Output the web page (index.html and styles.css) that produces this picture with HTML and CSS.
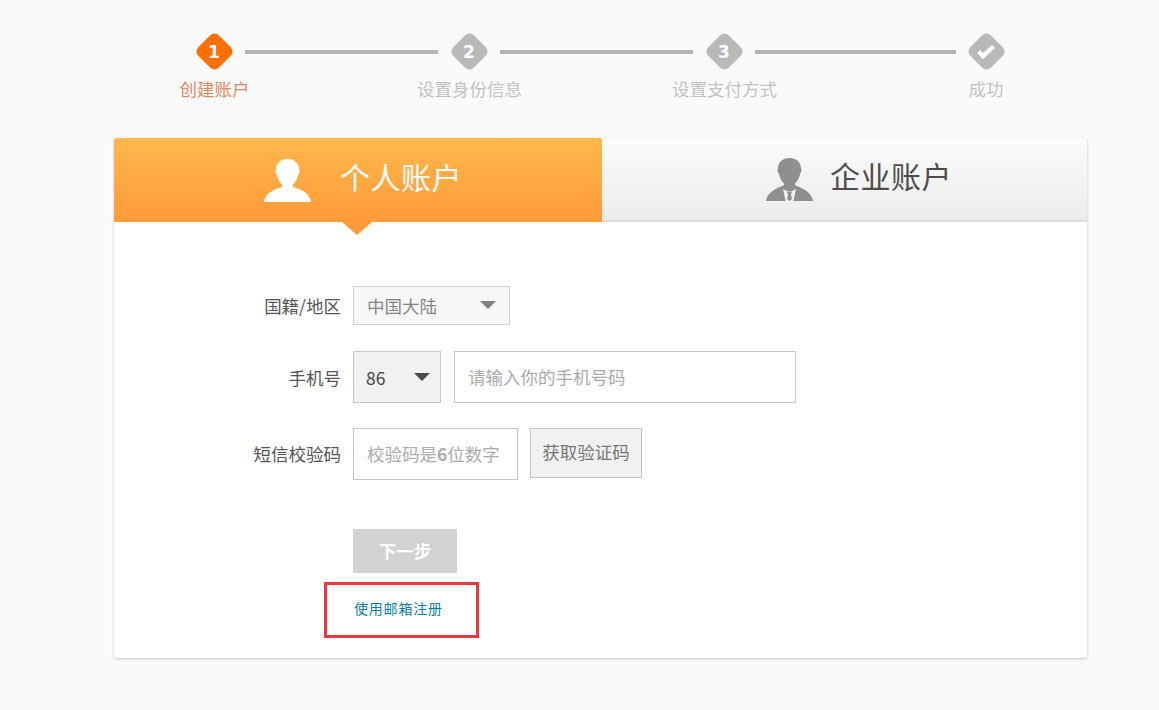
FILE: index.html
```html
<!DOCTYPE html>
<html lang="zh-CN">
<head>
    <meta charset="utf-8">
    <link rel="stylesheet" href="styles.css">
    <title>注册</title>
</head>
<body>
    <div class="steps">
        <div class="step-icons">
            <span class="step-icon active">1</span>
            <span class="step-line"></span>
            <span class="step-icon">2</span>
            <span class="step-line"></span>
            <span class="step-icon">3</span>
            <span class="step-line last"></span>
            <span class="step-icon">
                <svg width="20" height="16" viewBox="0 0 20 16"><path d="M1 9l3-3 3 3L16 1l3 3L7 15z" fill="#fff"/></svg>
            </span>
        </div>
        <div class="step-labels">
            <span class="active">创建账户</span>
            <span>设置身份信息</span>
            <span>设置支付方式</span>
            <span>成功</span>
        </div>
    </div>

    <div class="card">
        <div class="tabs">
            <div class="tab tab-on">
                <svg width="47" height="43" viewBox="0 0 47 43"><path d="M23.500 0C16.500 0 12 4.500 12 10.500 11 11 11.300 14 12.800 15.500 13.800 20 16 24 18 25.500V28C10 30.500 2 33 0 42.500 0 43 .5 43 1 43H46C46.500 43 47 43 47 42.500 45 33 37 30.500 29 28V25.500C31 24 33.200 20 34.200 15.500 35.700 14 36 11 35 10.500 35 4.500 30.500 0 23.500 0Z" fill="#fff"/></svg>
                <span class="tab-text">个人账户</span>
            </div>
            <div class="tab tab-off">
                <svg width="47" height="43" viewBox="0 0 47 43"><path d="M23.500 0C16.500 0 12 4.500 12 10.500 11 11 11.300 14 12.800 15.500 13.800 20 16 24 18 25.500V27C12 30 2 33 0 42.500 0 43 .5 43 1 43H19.500L17 31 21 33H26L30 31 27.500 43H46C46.500 43 47 43 47 42.500 45 33 35 30 29 27V25.500C31 24 33.200 20 34.200 15.500 35.700 14 36 11 35 10.500 35 4.500 30.500 0 23.500 0Z" fill="#8f8f8f"/><path d="M21 33.500h5l-1 3.500 1 4-2.500 2-2.500-2 1-4z" fill="#8f8f8f"/></svg>
                <span class="tab-text">企业账户</span>
            </div>
        </div>

        <div class="form">
            <div class="row row-country">
                <span class="row-label">国籍/地区</span>
                <div class="select select-country">中国大陆<i class="arrow"></i></div>
            </div>
            <div class="row row-phone">
                <span class="row-label">手机号</span>
                <div class="select select-code">86<i class="arrow dark"></i></div>
                <div class="input input-phone">请输入你的手机号码</div>
            </div>
            <div class="row row-code">
                <span class="row-label">短信校验码</span>
                <div class="input input-code">校验码是<b>6</b>位数字</div>
                <button class="btn-code">获取验证码</button>
            </div>
            <button class="btn-next">下一步</button>
            <div class="mail-box"><a href="#" class="mail-link">使用邮箱注册</a></div>
        </div>
    </div>
</body>
</html>
```

FILE: styles.css
```css
* {
    margin: 0;
    padding: 0;
    box-sizing: border-box;
}

html, body {
    height: 710px;
    overflow: hidden;
}

body {
    background-color: #fafafa;
    font-family: "Noto Sans CJK SC", "Liberation Sans", sans-serif;
    font-size: 17.5px;
    color: #555;
}

/* steps */
.steps {
    padding-top: 33px;
}

.step-icons {
    display: flex;
    align-items: center;
    padding-left: 195px;
    height: 37px;
}

.step-icon {
    position: relative;
    display: flex;
    align-items: center;
    justify-content: center;
    width: 38px;
    height: 37px;
    font-family: "DejaVu Sans", sans-serif;
    font-weight: bold;
    font-size: 17px;
    color: #fff;
}

.step-icon::before {
    content: "";
    position: absolute;
    z-index: -1;
    left: 4.500px;
    top: 4px;
    width: 29px;
    height: 29px;
    border-radius: 6px;
    background-color: #b9b9b9;
    transform: rotate(45deg);
}

.step-icon.active::before {
    background-color: #ff6f06;
}

.step-line {
    width: 193px;
    height: 4px;
    margin: 0 12px;
    background-color: #b4b4b4;
}

.step-line.last {
    width: 201px;
    margin-right: 11px;
}

.step-labels {
    display: grid;
    grid-template-columns: 255px 255px 255px 268px;
    margin: 6px 0 0 87px;
    line-height: 26px;
    text-align: center;
    color: #c2c2c2;
}

.step-labels .active {
    color: #de8a60;
}

/* card */
.card {
    width: 973px;
    height: 520px;
    margin: 36px 0 0 114px;
    background-color: #fff;
    border-radius: 3px;
    box-shadow: 0 1px 3px rgba(0, 0, 0, 0.22);
}

.tabs {
    display: flex;
    height: 84px;
}

.tab {
    position: relative;
    display: flex;
    align-items: center;
}

.tab-off {
    flex: 1;
    gap: 17px;
    padding-left: 164px;
    background: linear-gradient(#fbfbfb, #ececec);
    border-bottom: 2px solid #dedede;
    border-radius: 0 3px 0 0;
    color: #4d4d4d;
}

.tab-on {
    flex: 0 0 488px;
    gap: 29px;
    padding-left: 150px;
    background: linear-gradient(#ffb84b, #ff9a39);
    border-radius: 3px 0 0 0;
    color: #fff;
}

.tab-on::after {
    content: "";
    position: absolute;
    left: 228px;
    top: 84px;
    border-style: solid;
    border-width: 13px 15px 0;
    border-color: #ff9a39 transparent transparent;
}

.tab-text {
    font-size: 30px;
    letter-spacing: 0.5px;
    line-height: 40px;
    margin-top: -8px;
}

/* form */
.form {
    padding: 64px 0 0 239px;
}

.row {
    display: flex;
    align-items: center;
}

.row-label {
    flex: none;
    width: 227px;
    margin: 0 12px 0 -239px;
    text-align: right;
}

.row-country {
    height: 39px;
    margin-bottom: 26px;
}

.row-phone {
    height: 52px;
    margin-bottom: 25px;
}

.row-code {
    height: 52px;
    margin-bottom: 49px;
    align-items: flex-start;
}

.row-code .row-label {
    line-height: 52px;
}

.select {
    display: flex;
    align-items: center;
    justify-content: space-between;
    height: 100%;
    border: 1px solid #d0d0d0;
    background-color: #f7f7f7;
    color: #858585;
}

.select-country {
    width: 157px;
    padding: 0 13px 1px;
}

.select-code {
    width: 88px;
    margin-right: 13px;
    padding: 0 10px 0 12px;
    border-color: #c8c8c8;
    background-color: #f1f1f1;
    color: #444;
}

.arrow {
    width: 0;
    height: 0;
    border-style: solid;
    border-width: 8px 8px 0;
    border-color: #808080 transparent transparent;
}

.arrow.dark {
    border-color: #4a4a4a transparent transparent;
}

.input {
    display: flex;
    align-items: center;
    height: 52px;
    padding: 0 0 1px 13px;
    border: 1px solid #c4c4c4;
    background-color: #fff;
    color: #ababab;
    white-space: nowrap;
}

.input-phone {
    width: 342px;
}

.input-code {
    width: 165px;
    margin-right: 12px;
}

.btn-code {
    width: 112px;
    height: 50px;
    padding-bottom: 3px;
    border: 1px solid #c4c4c4;
    background-color: #f1f1f1;
    font: inherit;
    color: #777;
}

.btn-next {
    display: block;
    width: 104px;
    height: 44px;
    padding-bottom: 2px;
    border: none;
    background-color: #d2d2d2;
    font: inherit;
    font-weight: bold;
    color: #fff;
}

.mail-box {
    width: 155px;
    height: 56px;
    margin: 9px 0 0 -29px;
    padding-left: 27px;
    border: 3px solid #e8393f;
    line-height: 44px;
}

.mail-link {
    font-size: 14px;
    letter-spacing: 0.8px;
    color: #0a7ea4;
    text-decoration: none;
}
```
